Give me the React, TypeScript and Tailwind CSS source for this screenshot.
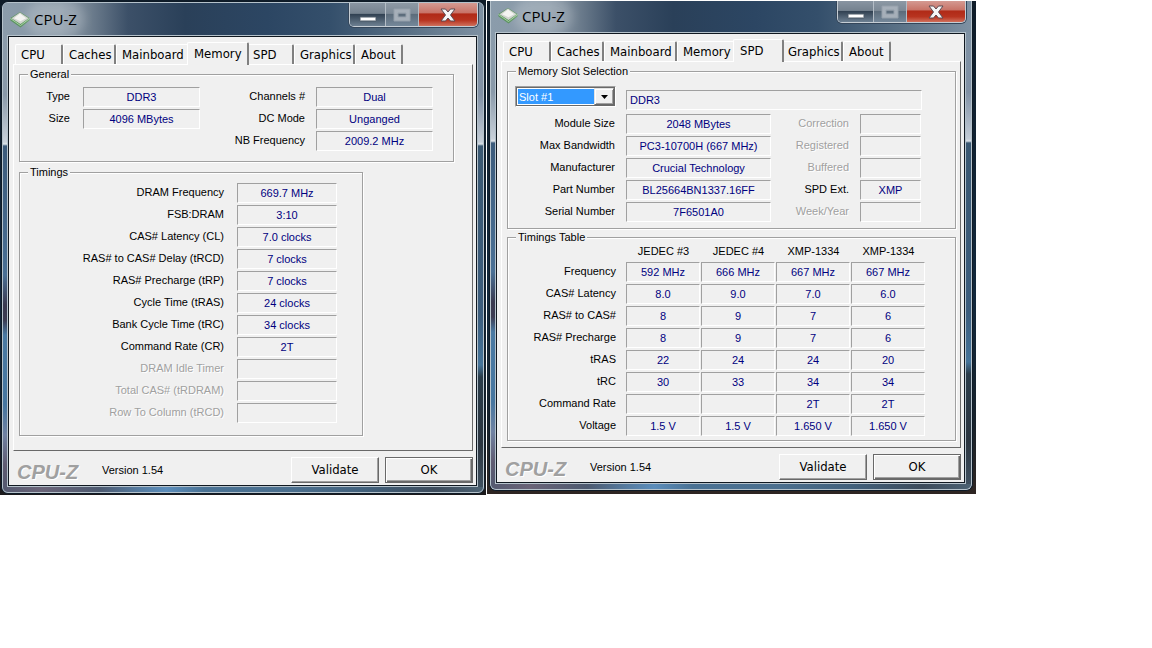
import React, { useState } from "react";

type Pair = { label: string; value?: string };

const TABS = ["CPU", "Caches", "Mainboard", "Memory", "SPD", "Graphics", "About"] as const;
type Tab = (typeof TABS)[number];

const TAB_WIDTH: Record<Tab, string> = {
  CPU: "w-12",
  Caches: "w-[53px]",
  Mainboard: "w-[73px]",
  Memory: "w-[58px]",
  SPD: "w-[47px]",
  Graphics: "w-[61px]",
  About: "w-12",
};

const GENERAL_LEFT: Pair[] = [
  { label: "Type", value: "DDR3" },
  { label: "Size", value: "4096 MBytes" },
];

const GENERAL_RIGHT: Pair[] = [
  { label: "Channels #", value: "Dual" },
  { label: "DC Mode", value: "Unganged" },
  { label: "NB Frequency", value: "2009.2 MHz" },
];

const TIMINGS: Pair[] = [
  { label: "DRAM Frequency", value: "669.7 MHz" },
  { label: "FSB:DRAM", value: "3:10" },
  { label: "CAS# Latency (CL)", value: "7.0 clocks" },
  { label: "RAS# to CAS# Delay (tRCD)", value: "7 clocks" },
  { label: "RAS# Precharge (tRP)", value: "7 clocks" },
  { label: "Cycle Time (tRAS)", value: "24 clocks" },
  { label: "Bank Cycle Time (tRC)", value: "34 clocks" },
  { label: "Command Rate (CR)", value: "2T" },
  { label: "DRAM Idle Timer" },
  { label: "Total CAS# (tRDRAM)" },
  { label: "Row To Column (tRCD)" },
];

const MODULE: Pair[] = [
  { label: "Module Size", value: "2048 MBytes" },
  { label: "Max Bandwidth", value: "PC3-10700H (667 MHz)" },
  { label: "Manufacturer", value: "Crucial Technology" },
  { label: "Part Number", value: "BL25664BN1337.16FF" },
  { label: "Serial Number", value: "7F6501A0" },
];

const FEATURES: Pair[] = [
  { label: "Correction" },
  { label: "Registered" },
  { label: "Buffered" },
  { label: "SPD Ext.", value: "XMP" },
  { label: "Week/Year" },
];

const PROFILES = ["JEDEC #3", "JEDEC #4", "XMP-1334", "XMP-1334"];

const PROFILE_ROWS: { label: string; values: string[] }[] = [
  { label: "Frequency", values: ["592 MHz", "666 MHz", "667 MHz", "667 MHz"] },
  { label: "CAS# Latency", values: ["8.0", "9.0", "7.0", "6.0"] },
  { label: "RAS# to CAS#", values: ["8", "9", "7", "6"] },
  { label: "RAS# Precharge", values: ["8", "9", "7", "6"] },
  { label: "tRAS", values: ["22", "24", "24", "20"] },
  { label: "tRC", values: ["30", "33", "34", "34"] },
  { label: "Command Rate", values: ["", "", "2T", "2T"] },
  { label: "Voltage", values: ["1.5 V", "1.5 V", "1.650 V", "1.650 V"] },
];

const SUNKEN =
  "h-5 border border-t-[#a0a0a0] border-l-[#a0a0a0] border-r-white border-b-white text-[#000080] leading-[18px] whitespace-nowrap";

function Fields({ items, columns }: { items: Pair[]; columns: string }) {
  return (
    <dl className={`grid content-start gap-y-0.5 ${columns}`}>
      {items.map(({ label, value }) => (
        <React.Fragment key={label}>
          <dt
            className={
              value
                ? "text-right leading-[18px] whitespace-nowrap"
                : "text-right leading-[18px] whitespace-nowrap text-[#a0a0a0] [text-shadow:1px_1px_0_#fff]"
            }
          >
            {label}
          </dt>
          <dd className={`${SUNKEN} text-center`}>{value}</dd>
        </React.Fragment>
      ))}
    </dl>
  );
}

function Group({ title, className, children }: { title: string; className: string; children: React.ReactNode }) {
  return (
    <fieldset
      className={`min-w-0 border border-[#a0a0a0] shadow-[1px_1px_0_#fff,inset_1px_1px_0_#fff] ${className}`}
    >
      <legend className="ml-2 bg-[#f0f0f0] px-0.5 leading-[13px]">{title}</legend>
      {children}
    </fieldset>
  );
}

function TabStrip({ active }: { active: Tab }) {
  return (
    <div role="tablist" className="flex h-[27px] items-end pl-0.5">
      {TABS.map((tab) => {
        const selected = tab === active;
        return (
          <div key={tab} className={`${TAB_WIDTH[tab]} relative h-5 ${selected ? "z-10" : ""}`}>
            <button
              type="button"
              role="tab"
              aria-selected={selected}
              className={
                selected
                  ? "absolute -inset-x-0.5 -top-0.5 -bottom-px rounded-t-[2px] border-t border-r-2 border-l border-t-white border-r-[#808080] border-l-white bg-[#f0f0f0] pl-1.5 text-left leading-[18px] whitespace-nowrap"
                  : "block h-full w-full rounded-t-[2px] border-t border-r-2 border-l border-t-white border-r-[#808080] border-l-white bg-[#f0f0f0] pl-[5px] text-left leading-[20px] whitespace-nowrap"
              }
            >
              {tab}
            </button>
          </div>
        );
      })}
    </div>
  );
}

function ChipIcon() {
  return (
    <svg viewBox="0 0 20 17" className="h-[17px] w-5" aria-hidden="true">
      <path d="M0.500 7 10 1l9.500 6v2.500L10.500 16.500 0.500 9.500z" fill="#5c9460" />
      <path d="M0.500 7.500 10.500 14.500l9-7" fill="none" stroke="#a9d2a4" strokeWidth="1" />
      <path d="M1.500 7.200 10 1.500l8.500 5.700-8 5.800z" fill="#d3d5d1" />
      <path d="M4 7.200 10 2.500l6 4.700-5.500 3z" fill="#f4f4f1" />
    </svg>
  );
}

function CaptionButtons({ height }: { height: string }) {
  return (
    <div
      className={`flex w-[129px] shrink-0 overflow-hidden rounded-b-[5px] border border-t-0 border-[#c5cdd4] shadow-[0_0_0_1px_#34465a] ${height}`}
    >
      <button
        type="button"
        aria-label="Minimize"
        className="flex w-9 items-center justify-center border-r border-[#b4bdc6] bg-[linear-gradient(#8995a2_0%,#75828f_45%,#324253_50%,#6d8092_100%)]"
      >
        <svg viewBox="0 0 18 6" className="mt-2 h-1.5 w-[18px]" aria-hidden="true">
          <rect x="1" y="1" width="16" height="4" rx="0.5" fill="#fff" stroke="#4b5967" />
        </svg>
      </button>
      <button
        type="button"
        aria-label="Maximize"
        disabled
        className="flex w-[33px] items-center justify-center border-r border-[#b4bdc6] bg-[linear-gradient(#8d99a5_0%,#7c8996_45%,#5c6c7b_50%,#75889a_100%)]"
      >
        <svg viewBox="0 0 18 14" className="h-3.5 w-[18px]" aria-hidden="true">
          <path d="M1 1h16v12H1zM5 5v4h8V5z" fill="#a6afb9" fillRule="evenodd" stroke="#95a0ab" />
        </svg>
      </button>
      <button
        type="button"
        aria-label="Close"
        className="flex flex-1 items-center justify-center bg-[linear-gradient(#d49a92_0%,#c87468_42%,#b02a17_48%,#b83420_75%,#d0705c_100%)]"
      >
        <svg viewBox="0 0 16 14" className="h-3.5 w-4" aria-hidden="true">
          <path
            d="M1 1h4.500L8 4l2.500-3H15l-4.500 6 4.500 6h-4.500L8 10l-2.500 3H1l4.500-6z"
            fill="#f6f6f6"
            stroke="#5a4a52"
            strokeLinejoin="round"
          />
        </svg>
      </button>
    </div>
  );
}

function AeroWindow({ active, clipped, children }: { active: Tab; clipped?: boolean; children: React.ReactNode }) {
  return (
    <section
      className={`overflow-hidden border-[#0e1a26] bg-[#7e91a3] ${
        clipped ? "rounded-b-[7px] border-x border-b" : "rounded-[7px] border"
      }`}
    >
      <div
        className={`overflow-hidden border-[#b5c2cb] ${
          clipped ? "rounded-b-[6px] border-x border-b" : "rounded-[6px] border"
        }`}
      >
        <header
          className={`flex items-start bg-[linear-gradient(90deg,#8b9cab_0%,#8797a5_12%,#6f7f8f_18%,#3c5068_26%,#2a4059_38%,#2c4663_55%,#344f6b_68%,#5a7186_85%,#7e91a3_100%)] pr-[5px] ${
            clipped ? "h-[31px]" : "h-8"
          }`}
        >
          <div className={`flex flex-1 items-center gap-1 pl-[7px] ${clipped ? "h-[29px]" : "h-8"}`}>
            <ChipIcon />
            <h1 className="rounded-full bg-white/20 font-['Open_Sans',sans-serif] text-[15px] leading-5 text-black shadow-[0_0_10px_8px_rgba(255,255,255,0.2)]">
              CPU-Z
            </h1>
          </div>
          <CaptionButtons height={clipped ? "h-[22px]" : "h-6"} />
        </header>
        <div className="flex">
          <div className="w-1 shrink-0 bg-[linear-gradient(#8b9cab_0px,#8999a9_60px,#c9d1da_107px,#e0e6ea_109px,#3c5b7b_111px,#4a7095_240px,#3a3a50_270px,#3c3c52_285px,#4a7aa3_300px,#4676a0_370px,#7082a2_400px,#605c72_430px,#555a70_100%)]" />
          <div className="min-w-0 flex-1 border border-[#b5c2cb]">
            <div className="border border-[#101820] bg-[#f0f0f0] pr-[3px] pb-0.5 pl-1">
              <div className="font-['DejaVu_Sans_Condensed','DejaVu_Sans',sans-serif] text-[13px]">
                <TabStrip active={active} />
              </div>
              <main className="border border-t-white border-r-[#696969] border-b-[#696969] border-l-white pt-[3px] pr-1 pl-[5px]">
                {children}
              </main>
              <footer className="mt-1.5 flex h-[26px] items-center gap-1.5 pl-1">
                <strong className="w-[79px] pt-1 text-[20px] leading-5 font-bold text-[#a0a0a0] italic [text-shadow:1px_1px_0_#fff]">
                  CPU-Z
                </strong>
                <span className="flex-1 leading-[14px]">Version 1.54</span>
                <button
                  type="button"
                  className="h-full w-22 border border-t-white border-r-[#696969] border-b-[#696969] border-l-white font-['DejaVu_Sans_Condensed','DejaVu_Sans',sans-serif] text-[13px] shadow-[inset_-1px_-1px_0_#a0a0a0]"
                >
                  Validate
                </button>
                <button
                  type="button"
                  className="h-full w-22 border border-[#696969] font-['DejaVu_Sans_Condensed','DejaVu_Sans',sans-serif] text-[13px] shadow-[inset_1px_1px_0_#fff,inset_-1px_-1px_0_#696969,inset_-2px_-2px_0_#a0a0a0]"
                >
                  OK
                </button>
              </footer>
            </div>
          </div>
          <div className="w-[5px] shrink-0 bg-[linear-gradient(#7e91a3_0px,#8191a5_60px,#c3ccd6_107px,#dbe2e8_109px,#3a5872_111px,#3c5d7d_280px,#45749a_330px,#2a3c4a_342px,#2b3540_410px,#3f505f_100%)]" />
        </div>
        <div className="h-[5px] bg-[linear-gradient(90deg,#555a70_0%,#6a6478_8%,#4d5a70_20%,#557a9e_28%,#5b8dbb_34%,#4a7294_42%,#4b6f8e_60%,#42617c_75%,#3d4c5c_90%,#4c6273_100%)]" />
      </div>
    </section>
  );
}

function MemoryPage() {
  return (
    <div className="pb-3.5">
      <Group title="General" className="mr-3.5 pb-2.5">
        <div className="flex justify-between pt-1.5 pr-5">
          <Fields items={GENERAL_LEFT} columns="grid-cols-[50px_117px] gap-x-[13px]" />
          <Fields items={GENERAL_RIGHT} columns="grid-cols-[105px_117px] gap-x-[11px]" />
        </div>
      </Group>
      <Group title="Timings" className="mt-1 mr-[105px] pb-3">
        <div className="pt-1">
          <Fields items={TIMINGS} columns="grid-cols-[204px_100px] gap-x-[13px]" />
        </div>
      </Group>
    </div>
  );
}

function SpdPage() {
  const [slot, setSlot] = useState("Slot #1");
  return (
    <div className="pb-1.5">
      <Group title="Memory Slot Selection" className="pb-1.5">
        <div className="flex items-start gap-2.5 pt-2 pr-[33px] pl-[7px]">
          <div className="relative flex h-[21px] w-[101px] border border-t-[#a0a0a0] border-r-white border-b-white border-l-[#a0a0a0] bg-white">
            <select
              aria-label="Memory slot"
              value={slot}
              onChange={(event) => setSlot(event.target.value)}
              className="w-full appearance-none border border-[#696969] bg-[#3399ff] bg-clip-content py-px pr-5 pl-px indent-px leading-[17px] text-white outline-none"
            >
              <option>Slot #1</option>
              <option>Slot #2</option>
              <option>Slot #3</option>
              <option>Slot #4</option>
            </select>
            <span className="pointer-events-none absolute top-px right-px bottom-px flex w-5 items-center justify-center border border-t-[#e3e3e3] border-r-[#696969] border-b-[#696969] border-l-[#e3e3e3] bg-[#f0f0f0] shadow-[inset_1px_1px_0_#fff,inset_-1px_-1px_0_#a0a0a0]">
              <svg viewBox="0 0 7 4" className="h-1 w-[7px]" aria-hidden="true">
                <path d="M0 0h7L3.500 4z" fill="#000" />
              </svg>
            </span>
          </div>
          <output className={`${SUNKEN} mt-1 flex-1 pl-[3px]`}>DDR3</output>
        </div>
        <div className="flex justify-between pt-1 pr-[34px]">
          <Fields items={MODULE} columns="grid-cols-[107px_145px] gap-x-[11px]" />
          <Fields items={FEATURES} columns="grid-cols-[78px_61px] gap-x-[11px]" />
        </div>
      </Group>
      <Group title="Timings Table" className="mt-0.5 pb-0.5">
        <table className="border-collapse">
          <thead>
            <tr className="h-[18px] align-top">
              <td className="p-0" />
              {PROFILES.map((profile, index) => (
                <th key={index} scope="col" className="p-0 leading-[14px] font-normal">
                  {profile}
                </th>
              ))}
            </tr>
          </thead>
          <tbody>
            {PROFILE_ROWS.map((row) => (
              <tr key={row.label} className="align-top">
                <th scope="row" className="w-[118px] p-0 pr-2.5 text-right leading-[18px] font-normal">
                  {row.label}
                </th>
                {row.values.map((value, index) => (
                  <td key={index} className="w-[75px] p-0 pr-px pb-0.5">
                    <div className={`${SUNKEN} text-center`}>{value}</div>
                  </td>
                ))}
              </tr>
            ))}
          </tbody>
        </table>
      </Group>
    </div>
  );
}

export default function App() {
  return (
    <div className="flex min-h-screen items-start gap-px bg-white font-['Liberation_Sans',Arial,sans-serif] text-[11px] text-black">
      <div className="max-w-[486px] flex-1 bg-[linear-gradient(#0f1c29_0%,#12283c_60%,#17222c_85%,#1c1a1c_100%)] px-px pt-px pb-px">
        <AeroWindow active="Memory">
          <MemoryPage />
        </AeroWindow>
      </div>
      <div className="mt-px max-w-[489px] flex-1 bg-[linear-gradient(#0f1c29_0%,#12283c_60%,#17222c_85%,#2e2522_100%)] pr-[3px] pb-[3px] pl-0.5">
        <AeroWindow active="SPD" clipped>
          <SpdPage />
        </AeroWindow>
      </div>
    </div>
  );
}
